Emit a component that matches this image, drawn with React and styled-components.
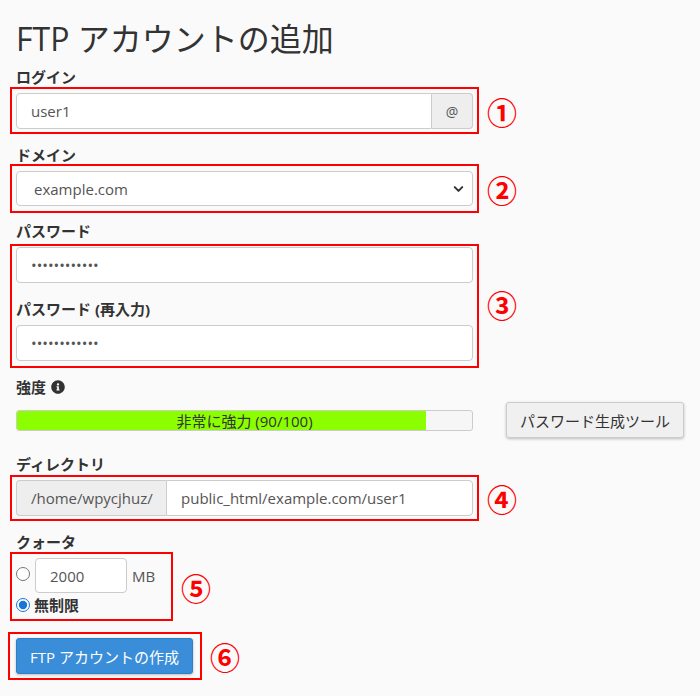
import React from "react";
import styled, { createGlobalStyle } from "styled-components";
import { FaInfoCircle } from "react-icons/fa";
import { ChevronDown } from "lucide-react";

const GlobalStyle = createGlobalStyle`
  body {
    margin: 0;
    background: #fafafa;
    color: #333;
    font-family: "Open Sans", "Noto Sans CJK JP", sans-serif;
  }
  * { box-sizing: border-box; }
`;

const Page = styled.div`
  padding: 0 16px 24px;
  width: 700px;
`;

const Title = styled.h1`
  font-size: 32px;
  line-height: 38px;
  font-weight: 400;
  margin: 20px 0 9px;
  color: #333;
`;

const Group = styled.div`
  margin-bottom: ${(p) => p.$mb ?? 16}px;
`;

const Label = styled.label`
  display: flex;
  align-items: center;
  gap: 5px;
  font-size: 15px;
  font-weight: 700;
  line-height: 20px;
  margin-top: ${(p) => p.$mt ?? 0}px;
  margin-bottom: ${(p) => p.$mb ?? 6}px;
  color: #333;
  svg {
    font-size: 14px;
    color: #333;
  }
`;

const Callout = styled.div`
  display: flex;
  align-items: center;
  gap: ${(p) => p.$gap ?? 14}px;
`;

// red annotation rectangle drawn around a block of fields
const Frame = styled.div`
  position: relative;
  width: ${(p) => p.$w ?? "457px"};
  &::after {
    content: "";
    position: absolute;
    inset: ${(p) => p.$inset ?? "-6px"};
    border: 2px solid #f00;
    pointer-events: none;
  }
`;

const Badge = styled.span`
  font-family: "Noto Sans CJK JP", sans-serif;
  font-weight: 700;
  font-size: 30px;
  line-height: 30px;
  color: #f00;
`;

const InputGroup = styled.div`
  display: flex;
  height: 36px;
`;

const Addon = styled.span`
  display: flex;
  align-items: center;
  padding: 0 14px;
  width: ${(p) => p.$w ?? "auto"};
  justify-content: ${(p) => (p.$center ? "center" : "flex-start")};
  background: #eee;
  border: 1px solid #ccc;
  color: #555;
  font-size: ${(p) => p.$fs ?? 15}px;
  border-radius: ${(p) => (p.$side === "left" ? "4px 0 0 4px" : "0 4px 4px 0")};
  ${(p) => (p.$side === "left" ? "border-right: none;" : "border-left: none;")}
`;

const TextInput = styled.input`
  display: block;
  width: ${(p) => p.$w ?? "100%"};
  flex: ${(p) => (p.$w ? "none" : "1")};
  height: ${(p) => p.$h ?? 36}px;
  padding: 0 14px;
  border: 1px solid #ccc;
  border-radius: ${(p) => p.$radius ?? "4px"};
  background: #fff;
  color: #555;
  font-family: inherit;
  font-size: 15px;
  outline: none;
`;

const SelectWrap = styled.div`
  position: relative;
  svg {
    position: absolute;
    right: 7px;
    top: 50%;
    transform: translateY(-50%);
    color: #333;
    pointer-events: none;
  }
`;

const Select = styled.select`
  appearance: none;
  display: block;
  width: 100%;
  height: 35px;
  padding: 0 30px 0 17px;
  border: 1px solid #ccc;
  border-radius: 4px;
  background: #fff;
  color: #555;
  font-family: inherit;
  font-size: 15px;
  outline: none;
`;

const StrengthRow = styled.div`
  display: flex;
  align-items: center;
  gap: 33px;
  height: 36px;
`;

const Meter = styled.div`
  position: relative;
  width: 457px;
  height: 21px;
  border: 1px solid #ccc;
  border-radius: 3px;
  background: #f6f6f6;
  overflow: hidden;
`;

const MeterFill = styled.div`
  height: 100%;
  background: #8bff00;
`;

const MeterText = styled.span`
  position: absolute;
  inset: 0;
  display: flex;
  align-items: center;
  justify-content: center;
  font-size: 15px;
  color: #333;
`;

const Button = styled.button`
  height: 36px;
  padding: 0 13px;
  font-family: inherit;
  font-size: 15px;
  border-radius: 3px;
  cursor: pointer;
  color: ${(p) => (p.$primary ? "#fff" : "#333")};
  background: ${(p) => (p.$primary ? "#3a8dd8" : "#f0f0f0")};
  border: 1px solid ${(p) => (p.$primary ? "#2f7fc7" : "#ccc")};
  box-shadow: 0 1px 3px rgba(0, 0, 0, 0.25);
`;

const QuotaRow = styled.div`
  display: flex;
  align-items: center;
  margin-top: ${(p) => p.$mt ?? 0}px;
  line-height: 20px;
  font-size: 15px;
`;

const Radio = styled.input.attrs({ type: "radio" })`
  width: 14px;
  height: 14px;
  margin: 0 ${(p) => p.$gap ?? 5}px ${(p) => p.$lift ?? 0}px 0;
  accent-color: #1a75d6;
`;

const Unit = styled.span`
  margin-left: 5px;
  color: #555;
`;

const RadioLabel = styled.span`
  font-weight: 700;
  color: #333;
`;

export default function App() {
  const strength = 90;

  return (
    <Page>
      <GlobalStyle />
      <Title>FTP アカウントの追加</Title>

      <Group>
        <Label>ログイン</Label>
        <Callout>
          <Frame $inset="-6px -6px -5px -6px">
            <InputGroup>
              <TextInput defaultValue="user1" $radius="4px 0 0 4px" />
              <Addon $side="right" $w="41px" $center $fs={14}>
                @
              </Addon>
            </InputGroup>
          </Frame>
          <Badge>①</Badge>
        </Callout>
      </Group>

      <Group $mb={15}>
        <Label>ドメイン</Label>
        <Callout>
          <Frame $inset="-7px -6px -7px -6px">
            <SelectWrap>
              <Select defaultValue="example.com">
                <option>example.com</option>
              </Select>
              <ChevronDown size={15} strokeWidth={3.2} />
            </SelectWrap>
          </Frame>
          <Badge>②</Badge>
        </Callout>
      </Group>

      <Group>
        <Label>パスワード</Label>
        <Callout>
          <Frame $inset="-3px -6px -7px -6px">
            <TextInput type="password" defaultValue="abcdefghijkl" />
            <Label $mt={16}>パスワード (再入力)</Label>
            <TextInput type="password" defaultValue="abcdefghijkl" />
          </Frame>
          <Badge>③</Badge>
        </Callout>
      </Group>

      <Group>
        <Label $mb={5}>
          強度 <FaInfoCircle />
        </Label>
        <StrengthRow>
          <Meter>
            <MeterFill style={{ width: `${strength}%` }} />
            <MeterText>非常に強力 ({strength}/100)</MeterText>
          </Meter>
          <Button>パスワード生成ツール</Button>
        </StrengthRow>
      </Group>

      <Group>
        <Label>ディレクトリ</Label>
        <Callout>
          <Frame $inset="-5px -6px -5px -6px">
            <InputGroup>
              <Addon $side="left" $w="150px">
                /home/wpycjhuz/
              </Addon>
              <TextInput
                defaultValue="public_html/example.com/user1"
                $radius="0 4px 4px 0"
              />
            </InputGroup>
          </Frame>
          <Badge>④</Badge>
        </Callout>
      </Group>

      <Group $mb={23}>
        <Label>クォータ</Label>
        <Callout>
          <Frame $w="151px" $inset="-6px">
            <QuotaRow>
              <Radio name="quota" $lift={4} />
              <TextInput defaultValue="2000" $w="92px" $h={35} />
              <Unit>MB</Unit>
            </QuotaRow>
            <QuotaRow $mt={2}>
              <Radio name="quota" defaultChecked $gap={4} />
              <RadioLabel>無制限</RadioLabel>
            </QuotaRow>
          </Frame>
          <Badge>⑤</Badge>
        </Callout>
      </Group>

      <Callout $gap={17}>
        <Frame $w="auto" $inset="-6px -9px -6px -8px">
          <Button $primary>FTP アカウントの作成</Button>
        </Frame>
        <Badge>⑥</Badge>
      </Callout>
    </Page>
  );
}
